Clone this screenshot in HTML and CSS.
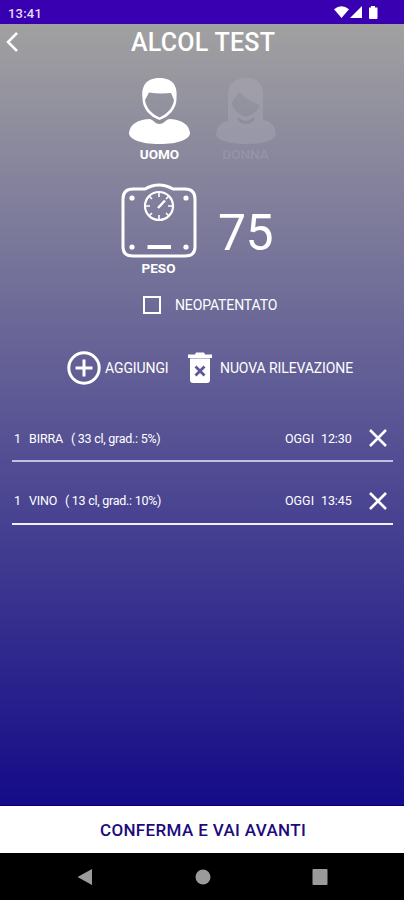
FILE: index.html
```html
<!DOCTYPE html>
<html lang="it">
<head>
<meta charset="utf-8">
<title>Alcol Test</title>
<link rel="stylesheet" href="styles.css">
</head>
<body>
<div class="status">
  <span class="clock">13:41</span>
  <svg class="signals" width="46" height="16" viewBox="0 0 46 16" fill="#fff"><path d="M0 4.2Q7.500-1.500 15 4.200L7.500 13Z"/><path d="M16 13H28V1Z"/><path d="M35 2.500h2V1h4v1.500h2.500V13a1 1 0 0 1-1 1H36a1 1 0 0 1-1-1Z"/></svg>
</div>
<main class="screen">
  <header class="header">
    <svg class="back" width="14" height="22" viewBox="0 0 14 22"><path d="M12 2L3 11L12 20" fill="none" stroke="#fff" stroke-width="2.500"/></svg>
    <h1 class="title"><span>ALCOL TEST</span></h1>
  </header>
  <section class="people">
    <div class="person">
      <svg width="64" height="70" viewBox="0 0 64 70"><path fill="#fff" fill-rule="evenodd" d="M14.500 22C13 8 20 2 31.500 2S50 8 48.500 22C49 32 41 41 31.500 44C22 41 14 32 14.500 22ZM17 24C18 32 24 38 31.500 41.500C39 38 45 32 46 24L43 17Q31 18 21 16.500Z"/><path fill="#fff" d="M21 43C25 43 27 48 31.500 48S38 43 42 43C55 44 61 49 62 57C62 63 51 68 31.500 68S1 63 1 57C2 49 8 44 21 43Z"/></svg>
      <span class="label uomo">UOMO</span>
    </div>
    <div class="person off">
      <svg width="64" height="70" viewBox="0 0 64 70"><path fill="#b7b6c2" fill-rule="evenodd" d="M14 45V18C14 7 22 2 32 2S49 7 49 18V44C57 45 61 50 62 58C61 64 50 68 32 68S2 64 2 58C3 50 7 46 14 45ZM18 26C18 33 24 38 31.500 41C39 38 45 35 45.500 29C38 26 30 22 25 16ZM23 43C27 50 37 50 41 43L39 41C36 46 28 46 25 41Z"/></svg>
      <span class="label donna">DONNA</span>
    </div>
  </section>
  <section class="weight">
    <div class="scale">
      <svg width="78" height="78" viewBox="0 0 78 78" fill="none" stroke="#fff"><path stroke-width="3" d="M13 6H25Q39-2 53 6H65Q75 6 75 16V64Q75 73 65 73H13Q3 73 3 64V16Q3 6 13 6Z"/><circle cx="39" cy="23" r="14" stroke-width="2.200"/><path stroke-width="1.600" d="M39 9v5M39 32v5M25 23h5M48 23h5M29 13l3 3M46 30l3 3M29 33l3-3M46 16l3-3"/><path stroke-width="2.500" d="M38 25L45 17.500"/><path stroke-width="4" d="M27.500 64H51"/><g fill="#fff" stroke="none"><circle cx="12" cy="15" r="2.600"/><circle cx="66" cy="15" r="2.600"/><circle cx="12" cy="64" r="2.600"/><circle cx="66" cy="64" r="2.600"/></g></svg>
      <span class="label peso">PESO</span>
    </div>
    <span class="kilos">75</span>
  </section>
  <label class="novice"><span class="box"></span><span class="novice-text">NEOPATENTATO</span></label>
  <section class="actions">
    <svg width="34" height="34" viewBox="0 0 34 34" fill="none" stroke="#fff" stroke-width="3"><circle cx="17" cy="17" r="15.200"/><path d="M17 8.500v17M8.500 17h17"/></svg>
    <span class="add">AGGIUNGI</span>
    <svg class="bin" width="24" height="34" viewBox="0 0 24 34"><path fill="#fff" d="M0 3.500H7L8 1.500H16L17 3.500H24V7H0Z"/><path fill="#fff" d="M2 7H22V29Q22 32 19 32H5Q2 32 2 29Z"/><path d="M2 7.500H22" stroke="#b9b5d6"/><path d="M7.500 15.500L16.500 24.500M16.500 15.500L7.500 24.500" stroke="#5d569b" stroke-width="2.800"/></svg>
    <span class="reset">NUOVA RILEVAZIONE</span>
  </section>
  <ul class="drinks">
    <li class="drink"><span class="qty">1</span><span class="name birra">BIRRA</span><span class="info info-birra">( 33 cl, grad.: 5%)</span><span class="day">OGGI</span><span class="time">12:30</span><svg width="18" height="18" viewBox="0 0 18 18"><path d="M1 1l16 16M17 1l-16 16" stroke="#fff" stroke-width="2.500"/></svg></li>
    <li class="drink last"><span class="qty">1</span><span class="name vino">VINO</span><span class="info info-vino">( 13 cl, grad.: 10%)</span><span class="day">OGGI</span><span class="time">13:45</span><svg width="18" height="18" viewBox="0 0 18 18"><path d="M1 1l16 16M17 1l-16 16" stroke="#fff" stroke-width="2.500"/></svg></li>
  </ul>
</main>
<button class="confirm"><span>CONFERMA E VAI AVANTI</span></button>
<nav class="nav">
  <svg width="16" height="18" viewBox="0 0 16 18"><path fill="#9b9b9b" d="M0.500 9L15 1V17Z"/></svg>
  <svg width="16" height="18" viewBox="0 0 16 18"><circle cx="8" cy="9" r="7.500" fill="#9b9b9b"/></svg>
  <svg width="16" height="18" viewBox="0 0 16 18"><rect x="0.500" y="1" width="15" height="16" rx="1" fill="#9b9b9b"/></svg>
</nav>
</body>
</html>
```
FILE: styles.css
```css
* { box-sizing: border-box; }
body { margin: 0; width: 404px; height: 900px; display: flex; flex-direction: column; font-family: Roboto, "Liberation Sans", sans-serif; color: #fff; overflow: hidden; white-space: nowrap; }
svg { display: block; flex: none; }
.status { height: 24px; flex: none; background: #3900b2; display: flex; justify-content: space-between; align-items: flex-start; padding: 5px 24px 0 8px; }
.clock { font-size: 13px; line-height: 17px; font-weight: 500; letter-spacing: 0.2px; color: #e4dcfa; }
.screen { height: 782px; flex: none; background: linear-gradient(#a1a1a1, #140b88); border-bottom: 1px solid #06007c; display: flex; flex-direction: column; }
.header { height: 36px; display: flex; align-items: center; padding-left: 5px; }
.title { margin: 2px 0 0 112px; font-size: 25px; line-height: 34px; font-weight: 500; letter-spacing: 0.25px; }
.people { margin-top: 16px; padding-left: 128px; display: flex; gap: 22px; height: 88px; }
.person { width: 64px; display: flex; flex-direction: column; align-items: center; }
.label { font-size: 13.500px; line-height: 16px; font-weight: 700; margin-right: 1px; }
.off svg { opacity: 0.3; }
.off .label { color: #9694a9; font-weight: 500; }
.weight { margin-top: 19px; padding-left: 120px; display: flex; height: 96px; }
.scale { width: 78px; display: flex; flex-direction: column; align-items: center; }
.peso { margin-top: -1px; }
.kilos { margin: 20px 0 0 20px; font-size: 50px; line-height: 60px; letter-spacing: -0.5px; }
.novice { height: 20px; margin-top: 16px; padding-left: 143px; display: flex; align-items: center; }
.box { width: 18px; height: 18px; border: 2px solid #fff; margin-right: 14px; }
.novice-text { font-size: 14px; letter-spacing: -0.120px; }
.actions { height: 34px; margin-top: 36px; padding-left: 67px; display: flex; align-items: center; font-size: 14px; letter-spacing: -0.100px; }
.add { width: 84px; padding-left: 4px; }
.bin { margin-left: 3px; }
.reset { margin-left: 8px; }
.drinks { list-style: none; margin: 15px 11px 0 12px; padding: 0; }
.drink { height: 62px; display: flex; align-items: center; padding: 16px 6px 0 2px; border-bottom: 2px solid #c3bfe0; font-size: 12.500px; }
.drink.last { height: 63px; border-bottom-color: #f0efff; }
.qty { width: 15px; }
.name { width: 42px; letter-spacing: -0.150px; }
.vino { width: 36px; }
.info { letter-spacing: -0.270px; }
.day { margin-left: auto; width: 36px; }
.time { width: 48px; letter-spacing: -0.100px; }
.confirm { height: 47px; flex: none; border: 0; padding: 0 0 0 2px; background: #fff; color: #1b0b7c; font: 500 17px/24px Roboto, sans-serif; letter-spacing: 0.350px; display: flex; align-items: center; justify-content: center; }
.nav { height: 47px; flex: none; background: #000; display: flex; gap: 101.500px; padding: 15px 0 0 77px; }
```
